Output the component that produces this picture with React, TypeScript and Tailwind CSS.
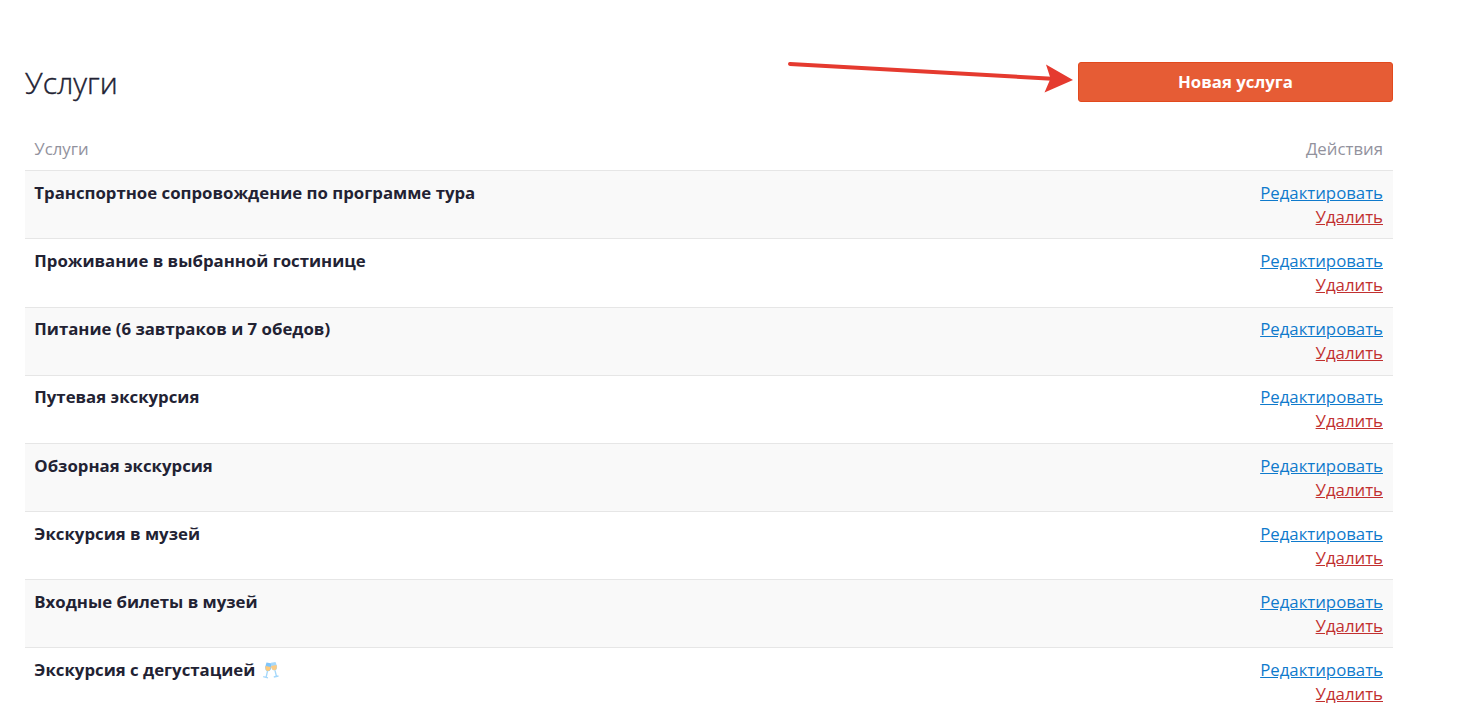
type Service = {
  id: number;
  title: string;
  toast?: boolean;
};

const SERVICES: Service[] = [
  { id: 1, title: "Транспортное сопровождение по программе тура" },
  { id: 2, title: "Проживание в выбранной гостинице" },
  { id: 3, title: "Питание (6 завтраков и 7 обедов)" },
  { id: 4, title: "Путевая экскурсия" },
  { id: 5, title: "Обзорная экскурсия" },
  { id: 6, title: "Экскурсия в музей" },
  { id: 7, title: "Входные билеты в музей" },
  { id: 8, title: "Экскурсия с дегустацией", toast: true },
];

export default function App() {
  return (
    <main className="h-[709px] overflow-hidden bg-white pl-[25px] pr-16 pt-[62px] font-['Open_Sans',sans-serif] text-[16.8px] leading-6 text-[#222233]">
      <header className="relative flex h-10 items-center justify-between">
        <h1 className="pt-0.5 text-[30px] font-light leading-10 [-webkit-text-stroke:0.4px_#222233]">
          Услуги
        </h1>
        <Arrow />
        <button
          type="button"
          className="h-10 w-[315px] rounded-[3px] border border-[#e2491d] bg-[#e65c35] font-bold text-white"
        >
          Новая услуга
        </button>
      </header>

      <div className="mt-[25.3px] flex h-[43px] items-center justify-between pl-[9.3px] pr-2.5 text-[#92929d]">
        <span>Услуги</span>
        <span>Действия</span>
      </div>

      <div>
        {SERVICES.map((s) => (
          <ServiceRow key={s.id} service={s} />
        ))}
      </div>
    </main>
  );
}

function ServiceRow({ service }: { service: Service }) {
  return (
    <div className="flex h-[68.16px] items-start justify-between border-t border-[#e6e6e6] pl-[9.3px] pr-2.5 pt-[9.64px] odd:bg-[#f9f9f9] even:bg-white">
      <div className="flex items-center font-bold">
        {service.title}
        {service.toast && <Glasses />}
      </div>
      <div className="flex flex-col items-end">
        <a href="#edit" className="text-[#0f7acc] underline">
          Редактировать
        </a>
        <a href="#delete" className="text-[#c13030] underline">
          Удалить
        </a>
      </div>
    </div>
  );
}

/** Hand-drawn pointer lying over the header, aimed at the button. */
function Arrow() {
  return (
    <svg
      className="absolute left-[760px] top-0 h-9 w-[292px]"
      viewBox="785 62 292 36"
      fill="none"
      aria-hidden="true"
    >
      <path
        d="M790 64L1052 78.7"
        stroke="#e53a2f"
        strokeWidth="4"
        strokeLinecap="round"
      />
      <path d="M1073 80L1046 64.5L1050.5 78.5L1044.5 92.5Z" fill="#e53a2f" />
    </svg>
  );
}

function Glasses() {
  return (
    <svg className="ml-[7px] h-[18px] w-[18px]" viewBox="0 0 18 18" fill="none">
      <path d="M4.5 1.5L10 2.5L9 8Q7.5 11 5 10Q3 9 3.2 6Z" fill="#7fc5fb" />
      <path d="M3.5 5L8.8 6L8 9Q6.5 10.5 5 9.8Q3 9 3.5 5Z" fill="#ffcb7c" />
      <path d="M9 1.8L13.5 1L15 5Q15.5 8.5 13 9.5Q10.5 10 9.5 7Z" fill="#a5d8fc" />
      <path d="M9 5L14.5 4Q15.6 8 13 9.2Q10.5 9.7 9.5 7Z" fill="#fbcb85" />
      <path
        d="M5.5 10L4.2 16M1.2 15.7L6 16.8M13 9.5L14.5 15.5M11.8 16L16.5 15"
        stroke="#a5d8fb"
        strokeWidth="1.3"
      />
    </svg>
  );
}
